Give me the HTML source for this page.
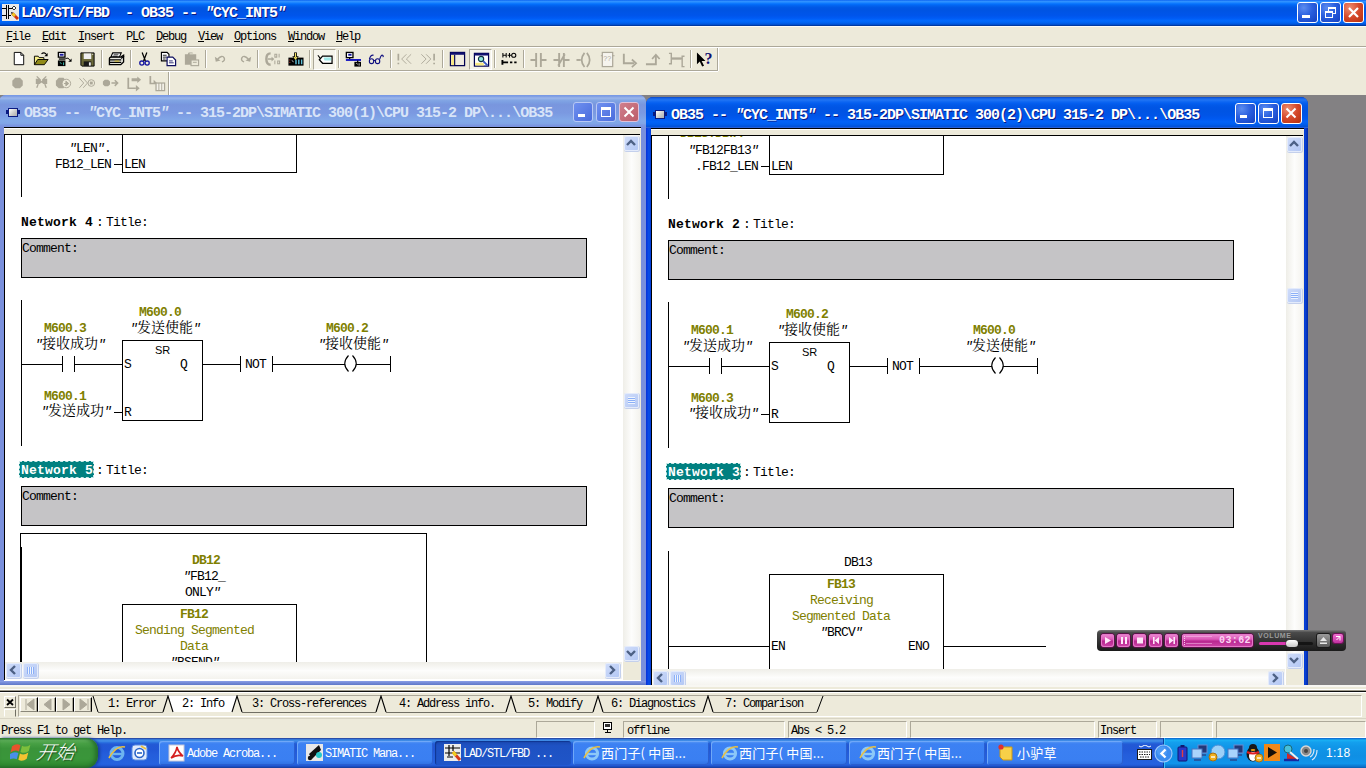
<!DOCTYPE html><html><head><meta charset="utf-8"><title>LAD/STL/FBD</title><style>
*{box-sizing:border-box}
html,body{margin:0;padding:0}
body{width:1366px;height:768px;overflow:hidden;position:relative;background:#edeada;
 font-family:"Liberation Mono","Noto Serif CJK SC",monospace;color:#000}
.a{position:absolute}
.t12{position:absolute;font-size:12px;letter-spacing:-1.2px;line-height:14px;white-space:pre}
.t14{position:absolute;font-size:13px;letter-spacing:-0.8px;line-height:16px;white-space:pre}
.t16{position:absolute;font-size:15px;letter-spacing:-1px;line-height:18px;white-space:pre;font-weight:bold}
.nw{position:absolute;font-size:13px;letter-spacing:0.2px;line-height:16px;white-space:pre;font-weight:bold}
.cj{font-family:"Noto Serif CJK SC",serif;font-size:14px;letter-spacing:0}
.ol{color:#808000}
.b{font-weight:bold}
.sr{position:absolute;font-family:"Liberation Sans",sans-serif;font-size:11px;line-height:12px}
u{text-decoration:underline;text-underline-offset:1px;text-decoration-thickness:1px}
#title{left:0;top:0;width:1366px;height:26px;
 background:linear-gradient(to bottom,#0058ee 0%,#3593ff 4%,#288eff 8%,#127dff 12%,#036ffc 16%,#0262ee 22%,#0057e5 30%,#0054e3 40%,#0055eb 60%,#005bf5 70%,#026afe 80%,#0062ef 88%,#0052d6 94%,#0040ab 97%,#003092 100%)}
.cb{position:absolute;width:21px;height:21px;border:1px solid #fff;border-radius:3px;
 background:radial-gradient(circle at 30% 25%,#5b8cf0 0%,#2a5fdf 45%,#1440c0 100%)}
.cb.x{background:radial-gradient(circle at 30% 25%,#ee8c70 0%,#d5482a 50%,#b5300f 100%)}
.cbi{position:absolute;width:21px;height:21px;border:1px solid #b8c8f4;border-radius:3px;
 background:linear-gradient(135deg,#6f90f0,#4a6cdc)}
.cbi.x{background:linear-gradient(135deg,#d07f8c,#bc5c6a);border-color:#e0c0d8}
#mdi{left:0;top:95px;width:1366px;height:591px;background:#838183;overflow:hidden}
.hl{position:absolute;height:1px;background:#000}
.vl{position:absolute;width:1px;background:#000}
.box{position:absolute;border:1px solid #000}
.cm{position:absolute;border:1px solid #000;background:#c5c4c6}
.sbv{position:absolute;width:17px;background:linear-gradient(to right,#efeee8,#fdfdfc 50%,#f4f3ee)}
.sbh{position:absolute;height:17px;background:linear-gradient(to bottom,#efeee8,#fdfdfc 50%,#f4f3ee)}
.sbb{position:absolute;width:15px;height:15px;margin:-0.5px 0 0 -0.5px;border:1px solid #e4ebfb;border-radius:2px;box-shadow:0.5px 0.5px 0 0.5px #c4d0ec;
 background:linear-gradient(135deg,#cfdcfa,#b4c8f4)}
.sep{position:absolute;width:2px;height:18px;border-left:1px solid #aca899;border-right:1px solid #fff}
.pane{position:absolute;top:721px;height:17px;border:1px solid;border-color:#aca899 #fff #fff #aca899}
#task{left:0;top:738px;width:1366px;height:30px;
 background:linear-gradient(to bottom,#1f2f86 0,#3165c4 3%,#3682e5 6%,#4490e6 10%,#3883e5 12%,#2b71e0 15%,#2663da 18%,#235bd6 20%,#2258d5 23%,#2157d6 38%,#245ddb 54%,#2562df 86%,#245fdc 89%,#2158d4 92%,#1d4ec0 95%,#1941a5 98%)}
.tbn{position:absolute;top:741px;width:136px;height:24px;border-radius:3px;
 background:linear-gradient(to bottom,#5a9af5 0,#3c81f3 12%,#3a7ff2 80%,#2f6fe0 100%);box-shadow:inset 1px 1px 0 #6fa8f8,inset -1px -1px 0 #2a5fd0}
.tbn.act{background:linear-gradient(to bottom,#1a48b0 0,#1e52c3 20%,#1f55c8 100%);box-shadow:inset 1px 1px 1px #0f3590}
.tbt{position:absolute;top:747px;color:#fff;font-size:12px;letter-spacing:-1.2px;line-height:14px;white-space:pre}
.tbt .cj{font-family:"Noto Sans CJK SC",sans-serif;font-size:12px}
</style></head><body>
<div id="title" class="a"></div><div class="a" style="left:0;top:26px;width:1366px;height:1px;background:#fbfaf6"></div>
<div class="t16" style="left:21px;top:5px;color:#fff;text-shadow:1px 1px #0a1883">LAD/STL/FBD  - OB35 -- <i>"</i>CYC_INT5<i>"</i></div>
<div class="cb" style="left:1297px;top:2px"><div class="a" style="left:4px;top:12px;width:8px;height:3px;background:#fff"></div></div>
<div class="cb" style="left:1320px;top:2px"><div class="a" style="left:7px;top:4px;width:8px;height:7px;border:1px solid #fff;border-top-width:2px"></div><div class="a" style="left:4px;top:8px;width:8px;height:7px;border:1px solid #fff;border-top-width:2px;background:#2f63e0"></div></div>
<div class="cb x" style="left:1343px;top:2px"><svg class="a" style="left:0;top:0" width="19" height="19"><path d="M5 5L14 14M14 5L5 14" stroke="#fff" stroke-width="2.2"/></svg></div>
<div class="t12" style="left:6px;top:30px"><u>F</u>ile</div>
<div class="t12" style="left:42px;top:30px"><u>E</u>dit</div>
<div class="t12" style="left:78px;top:30px"><u>I</u>nsert</div>
<div class="t12" style="left:126px;top:30px">P<u>L</u>C</div>
<div class="t12" style="left:156px;top:30px"><u>D</u>ebug</div>
<div class="t12" style="left:198px;top:30px"><u>V</u>iew</div>
<div class="t12" style="left:234px;top:30px"><u>O</u>ptions</div>
<div class="t12" style="left:288px;top:30px"><u>W</u>indow</div>
<div class="t12" style="left:336px;top:30px"><u>H</u>elp</div>
<div class="a" style="left:0;top:46px;width:1366px;height:1px;background:#aca899"></div>
<div class="a" style="left:0;top:47px;width:1366px;height:1px;background:#fff"></div>
<div class="a" style="left:0;top:70px;width:718px;height:1px;background:#aca899"></div>
<div class="a" style="left:0;top:71px;width:718px;height:1px;background:#fff"></div>
<div class="a" style="left:717px;top:48px;width:1px;height:22px;background:#aca899"></div>
<div class="a" style="left:718px;top:48px;width:1px;height:23px;background:#fff"></div>
<div class="a" style="left:168px;top:72px;width:1px;height:23px;background:#aca899"></div>
<div class="a" style="left:169px;top:72px;width:1px;height:23px;background:#fff"></div>
<div class="sep" style="left:101px;top:50px"></div>
<div class="sep" style="left:130px;top:50px"></div>
<div class="sep" style="left:205px;top:50px"></div>
<div class="sep" style="left:257px;top:50px"></div>
<div class="sep" style="left:309px;top:50px"></div>
<div class="sep" style="left:338px;top:50px"></div>
<div class="sep" style="left:390px;top:50px"></div>
<div class="sep" style="left:442px;top:50px"></div>
<div class="sep" style="left:494px;top:50px"></div>
<div class="sep" style="left:523px;top:50px"></div>
<div class="sep" style="left:690px;top:50px"></div>
<svg class="a" style="left:2px;top:4px" width="17" height="17"><rect width="17" height="17" fill="#e8e8e8"/><path d="M0 4.5h4M6 4.5h6M0 11.5h4M6 11.5h3M4.5 1v7M6.5 1v7M4.5 8v7M6.5 8v7" stroke="#000" fill="none"/><path d="M12 2l2 2l-2 2l-2 -2z" fill="#fff" stroke="#000" stroke-width=".8"/><path d="M9 8l3 1l-2 2z" fill="#000"/><path d="M10.5 9.5L16 15" stroke="#d03010" stroke-width="3"/><path d="M10.5 9.5L13 12" stroke="#f0c820" stroke-width="2.6"/></svg>
<div class="a" style="left:313px;top:49px;width:23px;height:21px;border:1px solid;border-color:#aca899 #fff #fff #aca899;background:#f6f4ec"></div>
<div class="a" style="left:469px;top:49px;width:23px;height:21px;border:1px solid;border-color:#aca899 #fff #fff #aca899;background:#f6f4ec"></div>
<svg class="a" style="left:10.0px;top:50.5px" width="17" height="17" viewBox="0 0 18 18"><path d="M4.5 1.5h7l3 3v10h-10z" fill="#fff" stroke="#000"/><path d="M11.5 1.5v3h3" fill="none" stroke="#000"/></svg>
<svg class="a" style="left:32.5px;top:50.5px" width="17" height="17" viewBox="0 0 18 18"><path d="M1.5 14.5v-9h4l1 1.5h5v2" fill="#f8f088" stroke="#000"/><path d="M1.5 14.5l3.5 -5.5h11l-4 5.5z" fill="#908a18" stroke="#000"/><path d="M9 3q3 -2.5 5.5 1" fill="none" stroke="#000" stroke-width="1.2"/><path d="M15.5 2v3.5h-3.5z" fill="#000"/></svg>
<svg class="a" style="left:55.5px;top:50.5px" width="17" height="17" viewBox="0 0 18 18"><rect x="2.5" y="1.500" width="7" height="5" fill="#fff" stroke="#000" stroke-width="1.4"/><rect x="4" y="3" width="4" height="2" fill="#1818a0"/><path d="M3 8.500h7" stroke="#000" stroke-width="1.4"/><rect x="2" y="10" width="8" height="6" fill="#000"/><path d="M4 12l2 1.500M8 12v3" stroke="#40c0b0" stroke-width="1"/><path d="M10 8q3 -2 5 2" fill="none" stroke="#000"/><path d="M16.500 8v3.500h-3.500z" fill="#000"/></svg>
<svg class="a" style="left:78.5px;top:50.5px" width="17" height="17" viewBox="0 0 18 18"><path d="M2 2h14v14h-13l-1 -1z" fill="#6a6838" stroke="#000"/><rect x="5" y="2.500" width="8" height="6" fill="#f0f0f0"/><rect x="5" y="11" width="8" height="5" fill="#181818"/><rect x="10.500" y="12" width="2" height="3.500" fill="#f0f0f0"/><rect x="14" y="3" width="1" height="1" fill="#fff"/></svg>
<svg class="a" style="left:107.5px;top:50.5px" width="17" height="17" viewBox="0 0 18 18"><path d="M5 2h9l-2 4.500h-9z" fill="#fff" stroke="#000" stroke-width="1.2"/><path d="M6 4h5M5 5.500h5" stroke="#000" stroke-width=".8"/><path d="M1.500 8q0 -1.500 2 -1.500h10l3 -2v7l-3 3h-12z" fill="#e8e8e0" stroke="#000" stroke-width="1.400"/><path d="M2 9.500h12M2 12h12M14 8l3 -3" stroke="#000" stroke-width="1.300"/><path d="M7 10.700h5" stroke="#d0b818"/></svg>
<svg class="a" style="left:136.0px;top:50.5px" width="17" height="17" viewBox="0 0 18 18"><path d="M6.500 1.500l3.500 9M11.500 1.500l-3.500 9" stroke="#000" stroke-width="1.300" fill="none"/><circle cx="6.200" cy="12.800" r="2.200" fill="none" stroke="#1818a0" stroke-width="1.400"/><circle cx="11.800" cy="12.800" r="2.200" fill="none" stroke="#1818a0" stroke-width="1.400"/></svg>
<svg class="a" style="left:160.0px;top:50.5px" width="17" height="17" viewBox="0 0 18 18"><path d="M1.500 1.500h6l2 2v7h-8z" fill="#fff" stroke="#000" stroke-width="1.200"/><path d="M3 4.500h4M3 6.500h4M3 8.500h3" stroke="#000" stroke-width=".9"/><path d="M7.500 6.500h6l3 3v6h-9z" fill="#fff" stroke="#101060" stroke-width="1.300"/><path d="M9.500 10.500h4M9.500 12.500h5" stroke="#101060" stroke-width=".9"/></svg>
<svg class="a" style="left:182.5px;top:50.5px" width="17" height="17" viewBox="0 0 18 18"><path d="M2 3.500h3l1 -2h4l1 2h3v11h-12z" fill="#aca899"/><path d="M7 3h4" stroke="#edeada"/><rect x="8.500" y="9.500" width="8" height="6" fill="#edeada" stroke="#aca899" stroke-width="1.200"/><path d="M10.500 12h4" stroke="#aca899"/></svg>
<svg class="a" style="left:211.5px;top:50.5px" width="17" height="17" viewBox="0 0 18 18"><path d="M6 8.500q5 -5 7 -1q1 3 -2.500 4" fill="none" stroke="#aca899" stroke-width="1.500"/><path d="M3 6l1 5.500l5 -1.500z" fill="#aca899"/></svg>
<svg class="a" style="left:236.5px;top:50.5px" width="17" height="17" viewBox="0 0 18 18"><path d="M12 8.500q-5 -5 -7 -1q-1 3 2.500 4" fill="none" stroke="#aca899" stroke-width="1.500"/><path d="M15 6l-1 5.500l-5 -1.500z" fill="#aca899"/></svg>
<svg class="a" style="left:263.5px;top:50.5px" width="17" height="17" viewBox="0 0 18 18"><path d="M7 2.500q-4.500 0 -4.500 6t4.500 6" fill="none" stroke="#aca899" stroke-width="2.600"/><path d="M4 8.500h5" stroke="#aca899" stroke-width="1.600"/><path d="M8 6l3 2.500l-3 2.500z" fill="#aca899"/><path d="M11.500 3.500h2v3h-2zM16 3v4M11.500 10v4M14.500 10.500h2v3h-2z" fill="none" stroke="#aca899" stroke-width="1.100"/></svg>
<svg class="a" style="left:286.5px;top:50.5px" width="17" height="17" viewBox="0 0 18 18"><rect x="1.500" y="7" width="16" height="8.500" fill="#000"/><path d="M9.500 9v5M12.500 9v5M15.500 9v5" stroke="#60c0d8" stroke-width="1.500"/><path d="M3 9v1M3 11.500v1" stroke="#e04838"/><path d="M5 10l2 1.500" stroke="#fff" stroke-width=".8"/><path d="M9 1.500v5" stroke="#000" stroke-width="3"/><path d="M5.500 5.500h7l-3.500 4z" fill="#000"/><path d="M9 2v5M7.500 6.500l1.500 2l1.500 -2" stroke="#f0e060" fill="none" stroke-width="1.200"/></svg>
<svg class="a" style="left:316.0px;top:50.5px" width="17" height="17" viewBox="0 0 18 18"><path d="M7 5.500h10v7.500h-10l-3.500 -3.700z" fill="#fff" stroke="#000" stroke-width="1.300"/><path d="M8 7h8v3h-7z" fill="#a0e8e8"/><path d="M2 4.500l3 4" stroke="#000" stroke-width="1.200"/></svg>
<svg class="a" style="left:344.0px;top:50.5px" width="17" height="17" viewBox="0 0 18 18"><rect x="2.500" y="1.500" width="7" height="5.500" fill="#fff" stroke="#000" stroke-width="1.400"/><rect x="4.500" y="3" width="3.500" height="2" fill="#1818a0"/><path d="M6 7v2" stroke="#000" stroke-width="1.400"/><path d="M2 9.500h16" stroke="#1010c0" stroke-width="2"/><rect x="11" y="11.500" width="7" height="5" fill="#000"/><path d="M13 13l1.500 1M16 13v2.500" stroke="#e8e8e8" stroke-width=".9"/><path d="M14.500 10v2" stroke="#000" stroke-width="1.400"/></svg>
<svg class="a" style="left:367.0px;top:50.5px" width="17" height="17" viewBox="0 0 18 18"><ellipse cx="4.800" cy="10.800" rx="2.300" ry="2.600" fill="none" stroke="#101080" stroke-width="1.200"/><ellipse cx="11.200" cy="10.800" rx="2.300" ry="2.600" fill="none" stroke="#101080" stroke-width="1.200"/><path d="M7.400 10h1.200M2.500 8.500q1.500 -5 4.500 -4M13.500 8.500q1.500 -5.500 3.500 -3.500l.2 1.500" fill="none" stroke="#101080" stroke-width="1.200"/></svg>
<svg class="a" style="left:395.5px;top:50.5px" width="17" height="17" viewBox="0 0 18 18"><path d="M2.500 3v7M2.500 12.500v1.500" stroke="#aca899" stroke-width="1.800"/><path d="M11 3.500l-5 5l5 5M16 3.500l-5 5l5 5" fill="none" stroke="#aca899" stroke-width="1"/></svg>
<svg class="a" style="left:418.5px;top:50.5px" width="17" height="17" viewBox="0 0 18 18"><path d="M16 3v7M16 12.500v1.500" stroke="#aca899" stroke-width="1.800"/><path d="M2.500 3.500l5 5l-5 5M7.500 3.500l5 5l-5 5" fill="none" stroke="#aca899" stroke-width="1"/></svg>
<svg class="a" style="left:448.5px;top:50.5px" width="17" height="17" viewBox="0 0 18 18"><rect x="1.500" y="1.500" width="15" height="14" fill="#f0ece0" stroke="#000050" stroke-width="1.300"/><rect x="1.500" y="1.500" width="15" height="2.500" fill="#101070"/><rect x="2.500" y="4.500" width="3" height="10.500" fill="#f8e880"/><path d="M6 4v11.500" stroke="#000050" stroke-width="1.200"/></svg>
<svg class="a" style="left:472.5px;top:50.5px" width="17" height="17" viewBox="0 0 18 18"><rect x="1.500" y="2.500" width="15" height="13.500" fill="#fff" stroke="#000050" stroke-width="1.300"/><rect x="1.500" y="2.500" width="15" height="2.300" fill="#101070"/><rect x="2.500" y="12.500" width="9" height="2.800" fill="#f8e880"/><circle cx="8.500" cy="8.500" r="2.800" fill="#90e8e0" stroke="#103040" stroke-width="1.200"/><path d="M10.800 10.800l4.500 4.500" stroke="#3858c0" stroke-width="2"/></svg>
<svg class="a" style="left:501.0px;top:50.5px" width="17" height="17" viewBox="0 0 18 18"><path d="M2 2v5M5.500 2v5M2 4.500h3.500M7 4.500h2M9 2v5M9 4.500h2" stroke="#000" stroke-width="1.100" fill="none"/><circle cx="13.500" cy="4.500" r="2.200" fill="none" stroke="#000" stroke-width="1.100"/><path d="M1.500 9.500v5M1.500 12h6" stroke="#000" stroke-width="2"/><path d="M9.500 12h2.500M14 12h2.500" stroke="#000" stroke-width="2"/></svg>
<svg class="a" style="left:529.5px;top:50.5px" width="17" height="17" viewBox="0 0 18 18"><path d="M0.500 9.500h6M11.500 9.500h6M6.500 2v15M11.500 2v15" stroke="#aca899" stroke-width="2" fill="none"/></svg>
<svg class="a" style="left:552.5px;top:50.5px" width="17" height="17" viewBox="0 0 18 18"><path d="M0.500 9.500h6M11.500 9.500h6M6.500 2v15M11.500 2v15M12.500 3.500l-7 12" stroke="#aca899" stroke-width="2" fill="none"/></svg>
<svg class="a" style="left:576.0px;top:50.5px" width="17" height="17" viewBox="0 0 18 18"><path d="M0.500 9.500h4.500" stroke="#aca899" stroke-width="2"/><path d="M9 2q-6 7.500 0 15M11.500 2q6 7.500 0 15" stroke="#aca899" stroke-width="1.800" fill="none"/></svg>
<svg class="a" style="left:598.5px;top:50.5px" width="17" height="17" viewBox="0 0 18 18"><rect x="3.500" y="1.500" width="11" height="15" fill="#f6f4ee" stroke="#aca899" stroke-width="1.300"/><path d="M2 5h2M14 5h2.500" stroke="#aca899"/><text x="4.600" y="10.500" font-family="Liberation Sans,sans-serif" font-size="7.500" fill="#aca899">??</text></svg>
<svg class="a" style="left:621.0px;top:50.5px" width="17" height="17" viewBox="0 0 18 18"><path d="M3 3v10h11" fill="none" stroke="#aca899" stroke-width="2"/><path d="M11.500 9l4.500 4l-4.500 4" fill="none" stroke="#aca899" stroke-width="1.800"/></svg>
<svg class="a" style="left:645.0px;top:50.5px" width="17" height="17" viewBox="0 0 18 18"><path d="M1 14h10.500v-9" fill="none" stroke="#aca899" stroke-width="2"/><path d="M7.500 8.500l4 -4.500l4 4.500" fill="none" stroke="#aca899" stroke-width="1.800"/></svg>
<svg class="a" style="left:667.5px;top:50.5px" width="17" height="17" viewBox="0 0 18 18"><path d="M1 2.500h2.500v11h-2.500M3.500 8h11M17.500 5.500h-2.500v11h2.500" fill="none" stroke="#aca899" stroke-width="1.500"/><path d="M4 8h10.500" stroke="#aca899" stroke-width="2.200"/></svg>
<svg class="a" style="left:695.5px;top:50.5px" width="17" height="17" viewBox="0 0 18 18"><path d="M1 1.500v12.500l3 -3l2.500 5.500l2 -1l-2.500 -5h4z" fill="#000"/><text x="9" y="14" font-family="Liberation Serif,serif" font-weight="bold" font-size="17" fill="#101070">?</text></svg>
<svg class="a" style="left:8.5px;top:74px" width="19" height="19" viewBox="0 0 20 20"><path d="M6.500 4h5l3 3v5l-3 3h-5l-3 -3v-5z" fill="#aca899"/></svg>
<svg class="a" style="left:31.5px;top:74px" width="19" height="19" viewBox="0 0 20 20"><path d="M4 5h4l2 2.500l2 -2.500h4v5.500h-4l-2 -1.500l-2 1.500h-4z" fill="#aca899"/><path d="M5 2.500l4 4M15 2.500l-4 4M5 14.500l1.500 -4M15 14.500l-1.500 -4" stroke="#aca899" stroke-width="1.400"/></svg>
<svg class="a" style="left:54.0px;top:74px" width="19" height="19" viewBox="0 0 20 20"><path d="M5 4h5l2.500 3v5l-2.500 3h-5l-3 -3v-5z" fill="#aca899"/><circle cx="13" cy="10" r="4.500" fill="#edeada" stroke="#aca899" stroke-width="1"/><path d="M10.500 10h3M12.500 7.500l3 2.500l-3 2.500z" fill="#aca899" stroke="#aca899"/></svg>
<svg class="a" style="left:77.5px;top:74px" width="19" height="19" viewBox="0 0 20 20"><path d="M1.500 4.500l4.500 5l-4.500 5M5.500 4.500l4.500 5l-4.500 5" fill="none" stroke="#aca899" stroke-width="1"/><circle cx="14" cy="9.500" r="3.500" fill="none" stroke="#aca899" stroke-width="1"/><rect x="12.500" y="8" width="3" height="3" fill="#aca899"/></svg>
<svg class="a" style="left:100.5px;top:74px" width="19" height="19" viewBox="0 0 20 20"><path d="M4 6h3.500l2 2v3l-2 2h-3.500l-2 -2v-3z" fill="#aca899"/><path d="M11 9.500h6M14.500 6.500l3 3l-3 3" fill="none" stroke="#aca899" stroke-width="1.600"/></svg>
<svg class="a" style="left:123.5px;top:74px" width="19" height="19" viewBox="0 0 20 20"><path d="M4.500 4v11h8" fill="none" stroke="#aca899" stroke-width="1.800"/><path d="M8 4.500h6v-2l4 3.500l-4 3.500v-2h-6z" fill="#aca899"/><path d="M12.500 11.500l4 3.500l-4 3.500z" fill="#aca899"/></svg>
<svg class="a" style="left:147.0px;top:74px" width="19" height="19" viewBox="0 0 20 20"><path d="M3.500 2v8h6" fill="none" stroke="#aca899" stroke-width="1.800"/><path d="M7 6l4 4l-4 0z" fill="#aca899"/><rect x="9.500" y="9.500" width="9" height="8" fill="#f4f2ea" stroke="#aca899" stroke-width="1.300"/><path d="M12.500 9.500v8M15.500 9.500v8" stroke="#aca899"/></svg>
<div id="mdi" class="a"></div>
<div class="a" style="left:-1px;top:95px;width:647px;height:605px;background:#7a90dc;border-radius:7px 7px 0 0"></div>
<div class="a" style="left:-1px;top:95px;width:647px;height:32px;background:linear-gradient(to bottom,#7697e7 0%,#7e9ee3 4%,#94afe8 8%,#97b4e9 11%,#82a5e4 17%,#7c9fe2 22%,#7996de 30%,#7b99e1 56%,#82a9e9 81%,#80a5e7 89%,#7b96e1 95%,#7a93df 100%);border-radius:7px 7px 0 0"></div>
<div class="a" style="left:6px;top:110px;width:14px;height:4px;background:#0a1a80"></div><div class="a" style="left:8px;top:108px;width:10px;height:9px;border:1px solid #0a1a80;background:linear-gradient(135deg,#fff,#c8c8c8 60%,#b0b0b0)"></div>
<div class="t16" style="left:24px;top:105px;color:#d8e4f8;">OB35 -- <i>"</i>CYC_INT5<i>"</i> -- 315-2DP\SIMATIC 300(1)\CPU 315-2 DP\...\OB35</div>
<div class="cbi" style="left:573px;top:102px;width:20px;height:20px"><div class="a" style="left:4px;top:11px;width:7px;height:3px;background:#fff"></div></div>
<div class="cbi" style="left:596px;top:102px;width:20px;height:20px"><div class="a" style="left:4px;top:4px;width:10px;height:10px;border:1px solid #fff;border-top-width:3px"></div></div>
<div class="cbi x" style="left:619px;top:102px;width:20px;height:20px"><svg class="a" style="left:0;top:0" width="18" height="18"><path d="M4.5 4.5L13.5 13.5M13.5 4.5L4.5 13.5" stroke="#fff" stroke-width="2"/></svg></div>
<div class="a" style="left:4px;top:127px;width:637px;height:565px;background:#edeada"></div>
<div class="a" style="left:4px;top:127px;width:637px;height:1px;background:#000"></div>
<div class="a" style="left:4px;top:128px;width:637px;height:1px;background:#fff"></div>
<div class="a" style="left:4px;top:134px;width:636px;height:1px;background:#000"></div>
<div class="a" style="left:4px;top:134px;width:619px;height:565px;background:#fff;border-top:1px solid #000;border-left:1px solid #000"></div>
<div class="a" style="left:5px;top:135px;width:617px;height:527px;overflow:hidden"><div class="a" style="left:-5px;top:-135px;width:700px;height:700px"><div class="vl" style="left:21px;top:120px;height:77px"></div>
<div class="t14 b ol" style="left:29px;top:124px">DB11.DBW10</div>
<div class="t14 " style="left:69px;top:141px;"><i>"</i>LEN<i>"</i>.</div>
<div class="t14 " style="left:55px;top:157px;">FB12_LEN</div>
<div class="hl" style="left:114px;top:164px;width:8px"></div>
<div class="box" style="left:122px;top:100px;width:175px;height:73px;"></div>
<div class="t14 " style="left:124px;top:157px;">LEN</div>
<div class="nw" style="left:21px;top:215px">Network 4</div>
<div class="t14 " style="left:96px;top:215px;">:</div>
<div class="t14 " style="left:106px;top:215px;">Title:</div>
<div class="cm" style="left:21px;top:238px;width:566px;height:40px;"></div>
<div class="t14 " style="left:22px;top:241px;">Comment:</div>
<div class="vl" style="left:21px;top:300px;height:146px"></div>
<div class="hl" style="left:21px;top:364px;width:41px"></div>
<div class="vl" style="left:62px;top:356px;height:16px"></div>
<div class="vl" style="left:74px;top:356px;height:16px"></div>
<div class="hl" style="left:74px;top:364px;width:48px"></div>
<div class="box" style="left:122px;top:340px;width:81px;height:81px;"></div>
<div class="sr" style="left:155px;top:344px">SR</div>
<div class="t14 " style="left:124px;top:357px;">S</div>
<div class="t14 " style="left:180px;top:357px;">Q</div>
<div class="t14 " style="left:124px;top:405px;">R</div>
<div class="hl" style="left:114px;top:412px;width:8px"></div>
<div class="hl" style="left:202px;top:364px;width:38px"></div>
<div class="vl" style="left:240px;top:356px;height:16px"></div>
<div class="t14 " style="left:245px;top:357px;">NOT</div>
<div class="vl" style="left:272px;top:356px;height:16px"></div>
<div class="hl" style="left:272px;top:364px;width:73px"></div>
<svg class="a" style="left:343px;top:355px" width="15" height="18"><path d="M5.5 0.5 Q-2 8.5 5.5 16.5M9.5 0.5 Q17 8.5 9.5 16.5" fill="none" stroke="#000" stroke-width="1.1"/></svg>
<div class="hl" style="left:356px;top:364px;width:34px"></div>
<div class="vl" style="left:390px;top:356px;height:16px"></div>
<div class="t14 b ol" style="left:44px;top:321px;">M600.3</div>
<div class="t14 " style="left:35px;top:332px;line-height:20px"><i>"</i><span class="cj">接收成功</span><i>"</i></div>
<div class="t14 b ol" style="left:139px;top:305px;">M600.0</div>
<div class="t14 " style="left:130px;top:316px;line-height:20px"><i>"</i><span class="cj">发送使能</span><i>"</i></div>
<div class="t14 b ol" style="left:44px;top:389px;">M600.1</div>
<div class="t14 " style="left:41px;top:399px;line-height:20px"><i>"</i><span class="cj">发送成功</span><i>"</i></div>
<div class="t14 b ol" style="left:326px;top:321px;">M600.2</div>
<div class="t14 " style="left:318px;top:332px;line-height:20px"><i>"</i><span class="cj">接收使能</span><i>"</i></div>
<div class="a" style="left:19px;top:461px;width:75px;height:17px;background:#008080;border:1px dashed #c8e8e8"></div>
<div class="nw" style="left:21px;top:463px;color:#fff">Network 5</div>
<div class="t14 " style="left:96px;top:463px;">:</div>
<div class="t14 " style="left:106px;top:463px;">Title:</div>
<div class="cm" style="left:21px;top:486px;width:566px;height:40px;"></div>
<div class="t14 " style="left:22px;top:489px;">Comment:</div>
<div class="box" style="left:20px;top:533px;width:407px;height:168px;"></div>
<div class="vl" style="left:21px;top:547px;height:153px"></div>
<div class="t14 b ol" style="left:192px;top:553px;">DB12</div>
<div class="t14 " style="left:183px;top:569px;"><i>"</i>FB12_</div>
<div class="t14 " style="left:185px;top:585px;">ONLY<i>"</i></div>
<div class="box" style="left:122px;top:604px;width:175px;height:97px;"></div>
<div class="t14 b ol" style="left:180px;top:607px;">FB12</div>
<div class="t14 ol" style="left:135px;top:623px;">Sending Segmented</div>
<div class="t14 ol" style="left:180px;top:639px;">Data</div>
<div class="t14 " style="left:170px;top:655px;"><i>"</i>BSEND<i>"</i></div></div></div>
<div class="sbv" style="left:623px;top:135px;height:527px"></div>
<div class="sbb" style="left:624px;top:136px"><svg width="14" height="14" viewBox="1 1 14 14" style="position:absolute;left:-0.5px;top:-0.5px"><path d="M4 10L8 6L12 10" fill="none" stroke="#4d6185" stroke-width="2.4"/></svg></div>
<div class="sbb" style="left:624px;top:646px"><svg width="14" height="14" viewBox="1 1 14 14" style="position:absolute;left:-0.5px;top:-0.5px"><path d="M4 6L8 10L12 6" fill="none" stroke="#4d6185" stroke-width="2.4"/></svg></div>
<div class="sbb" style="left:624px;top:393px"><svg width="14" height="14" style="position:absolute;left:-1px;top:-1px"><path d="M4 4.5h7M4 6.5h7M4 8.5h7M4 10.5h7" stroke="#eef4fe" stroke-width="1"/><path d="M4 5.5h7M4 7.5h7M4 9.5h7" stroke="#8cb0f8" stroke-width="1"/></svg></div>
<div class="sbh" style="left:5px;top:662px;width:617px"></div>
<div class="sbb" style="left:6px;top:663px"><svg width="14" height="14" viewBox="1 1 14 14" style="position:absolute;left:-0.5px;top:-0.5px"><path d="M10 4L6 8L10 12" fill="none" stroke="#4d6185" stroke-width="2.4"/></svg></div>
<div class="sbb" style="left:23px;top:663px"><svg width="14" height="14" style="position:absolute;left:-1px;top:-1px"><path d="M4.5 4v7M6.5 4v7M8.5 4v7M10.5 4v7" stroke="#8cb0f8" stroke-width="1"/><path d="M5.5 4v7M7.5 4v7M9.5 4v7" stroke="#eef4fe" stroke-width="1"/></svg></div>
<div class="sbb" style="left:605px;top:663px"><svg width="14" height="14" viewBox="1 1 14 14" style="position:absolute;left:-0.5px;top:-0.5px"><path d="M6 4L10 8L6 12" fill="none" stroke="#4d6185" stroke-width="2.4"/></svg></div>
<div class="a" style="left:623px;top:662px;width:17px;height:20px;background:#edeada"></div>
<div class="a" style="left:-1px;top:681px;width:647px;height:4px;background:linear-gradient(to bottom,#8a9ee6,#6f86d4 60%,#6078c8)"></div>
<div class="a" style="left:4px;top:680px;width:637px;height:1px;background:#fff"></div>
<div class="a" style="left:646px;top:97px;width:662px;height:603px;background:linear-gradient(to right,#0831d9 0,#0a50e8 3px,#0038d4 5px,#0038d4 calc(100% - 4px),#0a44d8 calc(100% - 3px),#0028a8 100%);border-radius:7px 7px 0 0"></div>
<div class="a" style="left:646px;top:97px;width:662px;height:31px;background:linear-gradient(to bottom,#0a48c8 0%,#1a6cf0 6%,#1f74f4 10%,#1068f2 15%,#045ff0 20%,#0259e8 26%,#0055e5 34%,#0054e3 45%,#0055e8 60%,#0059f0 70%,#0262f8 80%,#005eee 88%,#0052da 95%,#3a66d8 100%);border-radius:7px 7px 0 0"></div>
<div class="a" style="left:653px;top:112px;width:14px;height:4px;background:#0a1a80"></div><div class="a" style="left:655px;top:110px;width:10px;height:9px;border:1px solid #0a1a80;background:linear-gradient(135deg,#fff,#c8c8c8 60%,#b0b0b0)"></div>
<div class="t16" style="left:671px;top:107px;color:#fff;text-shadow:1px 1px #0a1883;">OB35 -- <i>"</i>CYC_INT5<i>"</i> -- 315-2DP\SIMATIC 300(2)\CPU 315-2 DP\...\OB35</div>
<div class="cb" style="left:1235px;top:103px;width:21px;height:21px"><div class="a" style="left:4px;top:11px;width:7px;height:3px;background:#fff"></div></div>
<div class="cb" style="left:1258px;top:103px;width:21px;height:21px"><div class="a" style="left:4px;top:4px;width:10px;height:10px;border:1px solid #fff;border-top-width:3px"></div></div>
<div class="cb x" style="left:1281px;top:103px;width:21px;height:21px"><svg class="a" style="left:0;top:0" width="18" height="18"><path d="M4.5 4.5L13.5 13.5M13.5 4.5L4.5 13.5" stroke="#fff" stroke-width="2"/></svg></div>
<div class="a" style="left:651px;top:128px;width:653px;height:564px;background:#edeada"></div>
<div class="a" style="left:651px;top:128px;width:653px;height:1px;background:#000"></div>
<div class="a" style="left:651px;top:129px;width:653px;height:1px;background:#fff"></div>
<div class="a" style="left:651px;top:135px;width:652px;height:1px;background:#000"></div>
<div class="a" style="left:651px;top:135px;width:635px;height:564px;background:#fff;border-top:1px solid #000;border-left:1px solid #000"></div>
<div class="a" style="left:652px;top:136px;width:633px;height:533px;overflow:hidden"><div class="a" style="left:-5px;top:-134px;width:700px;height:700px"><div class="vl" style="left:21px;top:120px;height:77px"></div>
<div class="t14 b ol" style="left:33px;top:124px">DB13.DBW4</div>
<div class="t14 " style="left:41px;top:141px;"><i>"</i>FB12FB13<i>"</i></div>
<div class="t14 " style="left:48px;top:157px;">.FB12_LEN</div>
<div class="hl" style="left:114px;top:164px;width:8px"></div>
<div class="box" style="left:122px;top:100px;width:175px;height:73px;"></div>
<div class="t14 " style="left:124px;top:157px;">LEN</div>
<div class="nw" style="left:21px;top:215px">Network 2</div>
<div class="t14 " style="left:96px;top:215px;">:</div>
<div class="t14 " style="left:106px;top:215px;">Title:</div>
<div class="cm" style="left:21px;top:238px;width:566px;height:40px;"></div>
<div class="t14 " style="left:22px;top:241px;">Comment:</div>
<div class="vl" style="left:21px;top:300px;height:146px"></div>
<div class="hl" style="left:21px;top:364px;width:41px"></div>
<div class="vl" style="left:62px;top:356px;height:16px"></div>
<div class="vl" style="left:74px;top:356px;height:16px"></div>
<div class="hl" style="left:74px;top:364px;width:48px"></div>
<div class="box" style="left:122px;top:340px;width:81px;height:81px;"></div>
<div class="sr" style="left:155px;top:344px">SR</div>
<div class="t14 " style="left:124px;top:357px;">S</div>
<div class="t14 " style="left:180px;top:357px;">Q</div>
<div class="t14 " style="left:124px;top:405px;">R</div>
<div class="hl" style="left:114px;top:412px;width:8px"></div>
<div class="hl" style="left:202px;top:364px;width:38px"></div>
<div class="vl" style="left:240px;top:356px;height:16px"></div>
<div class="t14 " style="left:245px;top:357px;">NOT</div>
<div class="vl" style="left:272px;top:356px;height:16px"></div>
<div class="hl" style="left:272px;top:364px;width:73px"></div>
<svg class="a" style="left:343px;top:355px" width="15" height="18"><path d="M5.5 0.5 Q-2 8.5 5.5 16.5M9.5 0.5 Q17 8.5 9.5 16.5" fill="none" stroke="#000" stroke-width="1.1"/></svg>
<div class="hl" style="left:356px;top:364px;width:34px"></div>
<div class="vl" style="left:390px;top:356px;height:16px"></div>
<div class="t14 b ol" style="left:44px;top:321px;">M600.1</div>
<div class="t14 " style="left:35px;top:332px;line-height:20px"><i>"</i><span class="cj">发送成功</span><i>"</i></div>
<div class="t14 b ol" style="left:139px;top:305px;">M600.2</div>
<div class="t14 " style="left:130px;top:316px;line-height:20px"><i>"</i><span class="cj">接收使能</span><i>"</i></div>
<div class="t14 b ol" style="left:44px;top:389px;">M600.3</div>
<div class="t14 " style="left:41px;top:399px;line-height:20px"><i>"</i><span class="cj">接收成功</span><i>"</i></div>
<div class="t14 b ol" style="left:326px;top:321px;">M600.0</div>
<div class="t14 " style="left:318px;top:332px;line-height:20px"><i>"</i><span class="cj">发送使能</span><i>"</i></div>
<div class="a" style="left:19px;top:461px;width:75px;height:17px;background:#008080;border:1px dashed #c8e8e8"></div>
<div class="nw" style="left:21px;top:463px;color:#fff">Network 3</div>
<div class="t14 " style="left:96px;top:463px;">:</div>
<div class="t14 " style="left:106px;top:463px;">Title:</div>
<div class="cm" style="left:21px;top:486px;width:566px;height:40px;"></div>
<div class="t14 " style="left:22px;top:489px;">Comment:</div>
<div class="vl" style="left:21px;top:549px;height:151px"></div>
<div class="t14 " style="left:197px;top:553px;">DB13</div>
<div class="box" style="left:122px;top:572px;width:175px;height:129px;"></div>
<div class="t14 b ol" style="left:180px;top:575px;">FB13</div>
<div class="t14 ol" style="left:163px;top:591px;">Receiving</div>
<div class="t14 ol" style="left:145px;top:607px;">Segmented Data</div>
<div class="t14 " style="left:173px;top:623px;"><i>"</i>BRCV<i>"</i></div>
<div class="hl" style="left:21px;top:644px;width:101px"></div>
<div class="t14 " style="left:124px;top:637px;">EN</div>
<div class="t14 " style="left:261px;top:637px;">ENO</div>
<div class="hl" style="left:296px;top:644px;width:103px"></div></div></div>
<div class="sbv" style="left:1286px;top:136px;height:533px"></div>
<div class="sbb" style="left:1287px;top:137px"><svg width="14" height="14" viewBox="1 1 14 14" style="position:absolute;left:-0.5px;top:-0.5px"><path d="M4 10L8 6L12 10" fill="none" stroke="#4d6185" stroke-width="2.4"/></svg></div>
<div class="sbb" style="left:1287px;top:653px"><svg width="14" height="14" viewBox="1 1 14 14" style="position:absolute;left:-0.5px;top:-0.5px"><path d="M4 6L8 10L12 6" fill="none" stroke="#4d6185" stroke-width="2.4"/></svg></div>
<div class="sbb" style="left:1287px;top:288px"><svg width="14" height="14" style="position:absolute;left:-1px;top:-1px"><path d="M4 4.5h7M4 6.5h7M4 8.5h7M4 10.5h7" stroke="#eef4fe" stroke-width="1"/><path d="M4 5.5h7M4 7.5h7M4 9.5h7" stroke="#8cb0f8" stroke-width="1"/></svg></div>
<div class="sbh" style="left:652px;top:669px;width:633px"></div>
<div class="sbb" style="left:653px;top:671px"><svg width="14" height="14" viewBox="1 1 14 14" style="position:absolute;left:-0.5px;top:-0.5px"><path d="M10 4L6 8L10 12" fill="none" stroke="#4d6185" stroke-width="2.4"/></svg></div>
<div class="sbb" style="left:670px;top:671px"><svg width="14" height="14" style="position:absolute;left:-1px;top:-1px"><path d="M4.5 4v7M6.5 4v7M8.5 4v7M10.5 4v7" stroke="#8cb0f8" stroke-width="1"/><path d="M5.5 4v7M7.5 4v7M9.5 4v7" stroke="#eef4fe" stroke-width="1"/></svg></div>
<div class="sbb" style="left:1268px;top:671px"><svg width="14" height="14" viewBox="1 1 14 14" style="position:absolute;left:-0.5px;top:-0.5px"><path d="M6 4L10 8L6 12" fill="none" stroke="#4d6185" stroke-width="2.4"/></svg></div>
<div class="a" style="left:1286px;top:669px;width:17px;height:20px;background:#edeada"></div>
<div class="a" style="left:0;top:685px;width:1366px;height:53px;background:#edeada"></div>
<div class="a" style="left:0;top:689px;width:1366px;height:1px;background:#fff"></div>
<div class="a" style="left:0;top:690px;width:1366px;height:1px;background:#a09c8c"></div><div class="a" style="left:0;top:691px;width:1366px;height:1px;background:#101010"></div><div class="a" style="left:0;top:685px;width:1366px;height:2px;background:#f8f7f2"></div>
<div class="a" style="left:0;top:692px;width:1366px;height:1px;background:#fff"></div>
<div class="a" style="left:18px;top:695px;width:1344px;height:22px;border:1px solid;border-color:#aca899 #fff #fff #aca899"></div>
<div class="a" style="left:4px;top:696px;width:12px;height:12px;border:1px solid;border-color:#fff #716f64 #716f64 #fff"><svg width="10" height="10" style="position:absolute;left:0;top:0"><path d="M2 2.5L8 8M8 2.5L2 8" stroke="#000" stroke-width="1.8"/></svg></div>
<div class="a" style="left:4px;top:709px;width:12px;height:8px;border:1px solid;border-color:#fff #716f64 transparent #fff"></div>
<div class="a" style="left:20px;top:697px;width:18px;height:15px;border:1px solid;border-color:#fff #000 #8a877a #fff;box-shadow:inset -1px 0 0 #aca899"><svg width="16" height="13" viewBox="0 1 16 13" style="position:absolute;left:0;top:0"><path d="M5 2v11M13 2L6 7.5L13 13z" fill="#aca899" stroke="#aca899" stroke-width="1"/></svg></div>
<div class="a" style="left:38px;top:697px;width:18px;height:15px;border:1px solid;border-color:#fff #000 #8a877a #fff;box-shadow:inset -1px 0 0 #aca899"><svg width="16" height="13" viewBox="0 1 16 13" style="position:absolute;left:0;top:0"><path d="M12 2L5 7.5L12 13z" fill="#aca899" stroke="#aca899" stroke-width="1"/></svg></div>
<div class="a" style="left:56px;top:697px;width:18px;height:15px;border:1px solid;border-color:#fff #000 #8a877a #fff;box-shadow:inset -1px 0 0 #aca899"><svg width="16" height="13" viewBox="0 1 16 13" style="position:absolute;left:0;top:0"><path d="M6 2L13 7.5L6 13z" fill="#aca899" stroke="#aca899" stroke-width="1"/></svg></div>
<div class="a" style="left:74px;top:697px;width:18px;height:15px;border:1px solid;border-color:#fff #000 #8a877a #fff;box-shadow:inset -1px 0 0 #aca899"><svg width="16" height="13" viewBox="0 1 16 13" style="position:absolute;left:0;top:0"><path d="M13 2v11M5 2L12 7.5L5 13z" fill="#aca899" stroke="#aca899" stroke-width="1"/></svg></div>
<svg class="a" style="left:90px;top:695px" width="740" height="19"><path d="M78 0.5 L83 17 L142 17 L147 0.5 Z" fill="#fff"/><path d="M3 1 L8 17" stroke="#000" fill="none"/><path d="M73 17 L78 1 L83 17" stroke="#000" fill="none" stroke-width="1.1"/><path d="M142 17 L147 1 L152 17" stroke="#000" fill="none" stroke-width="1.1"/><path d="M286 17 L291 1 L296 17" stroke="#000" fill="none" stroke-width="1.1"/><path d="M416 17 L421 1 L426 17" stroke="#000" fill="none" stroke-width="1.1"/><path d="M503 17 L508 1 L513 17" stroke="#000" fill="none" stroke-width="1.1"/><path d="M613 17 L618 1 L623 17" stroke="#000" fill="none" stroke-width="1.1"/><path d="M727 17 L733 1" stroke="#000" fill="none"/><path d="M8 17.5 H73" stroke="#716f64"/><path d="M152 17.5 H286" stroke="#716f64"/><path d="M296 17.5 H416" stroke="#716f64"/><path d="M426 17.5 H503" stroke="#716f64"/><path d="M513 17.5 H613" stroke="#716f64"/><path d="M623 17.5 H727" stroke="#716f64"/></svg>
<div class="t12" style="left:108px;top:697px">1: Error</div>
<div class="t12" style="left:182px;top:697px">2: Info</div>
<div class="t12" style="left:252px;top:697px">3: Cross-references</div>
<div class="t12" style="left:399px;top:697px">4: Address info.</div>
<div class="t12" style="left:528px;top:697px">5: Modify</div>
<div class="t12" style="left:611px;top:697px">6: Diagnostics</div>
<div class="t12" style="left:725px;top:697px">7: Comparison</div>
<div class="a" style="left:0;top:718px;width:1366px;height:1px;background:#d8d4c4"></div>
<div class="t12" style="left:1px;top:724px">Press F1 to get Help.</div>
<div class="pane" style="left:536px;width:59px"></div>
<div class="pane" style="left:623px;width:162px"></div>
<div class="pane" style="left:788px;width:119px"></div>
<div class="pane" style="left:910px;width:185px"></div>
<div class="pane" style="left:1098px;width:59px"></div>
<div class="pane" style="left:1160px;width:53px"></div>
<div class="pane" style="left:1216px;width:150px"></div>
<svg class="a" style="left:603px;top:722px" width="10" height="12"><rect x="0.5" y="0.5" width="8" height="7" fill="#fff" stroke="#000"/><rect x="2" y="2" width="5" height="3" fill="#333"/><path d="M2 10.5h6M4.5 8v2" stroke="#000"/></svg>
<div class="t12" style="left:627px;top:724px">offline</div>
<div class="t12" style="left:791px;top:724px">Abs &lt; 5.2</div>
<div class="t12" style="left:1100px;top:724px">Insert</div>
<div id="task" class="a"></div>
<div class="a" style="left:0;top:738px;width:98px;height:30px;border-radius:0 12px 12px 0;background:linear-gradient(to bottom,#2f7d2f 0,#5eb05a 8%,#48a045 18%,#3a943a 35%,#3a963a 70%,#2f8a30 90%,#256f28 100%);box-shadow:inset -3px 0 4px #256d2a, 2px 0 3px #1a3f9a"></div>
<svg class="a" style="left:10px;top:742px" width="23" height="21" viewBox="0 0 22 20"><path d="M2 4 q4 -3 8 -1 l-1.5 6 q-4 -2 -8 1z" fill="#e8532c"/><path d="M11.5 3.5 q4 2 8 -1 l-1.5 6 q-4 3 -8 1z" fill="#7cbf3c"/><path d="M0 11.5 q4 -3 8 -1 l-1.5 6 q-4 -2 -8 1z" fill="#4a8fe8"/><path d="M9.5 11 q4 2 8 -1 l-1.5 6 q-4 3 -8 1z" fill="#f4c331"/></svg>
<div class="a" style="left:37px;top:739px;font:italic 300 19px/24px 'Noto Sans CJK SC',sans-serif;color:#fff;text-shadow:1px 1px 1px #1d4a1d;transform:skewX(-10deg)">开始</div>
<svg class="a" style="left:108px;top:744px" width="18" height="18"><circle cx="9" cy="9.5" r="6" fill="none" stroke="#6db4f0" stroke-width="3"/><path d="M4 10h10" stroke="#6db4f0" stroke-width="2.4"/><path d="M1 14 Q8 1 17 3" fill="none" stroke="#e8c044" stroke-width="1.6"/></svg>
<svg class="a" style="left:131px;top:744px" width="18" height="18"><rect x="1" y="1" width="15" height="15" rx="3" fill="#dfeafc" stroke="#5d8ee0"/><circle cx="8.5" cy="9" r="4.5" fill="#fff" stroke="#2a64c8" stroke-width="1.6"/><path d="M6 9h5" stroke="#2a64c8" stroke-width="1.6"/><path d="M10 2l5 3" stroke="#e8c044" stroke-width="2"/></svg>
<div class="tbn" style="left:159px"></div>
<svg class="a" style="left:168px;top:744px" width="18" height="18"><rect x="1" y="1" width="15" height="16" fill="#fff" stroke="#c8c8d8"/><path d="M3 14 Q8 9 9 3 Q10 8 15 12 Q9 10 3 14z" fill="none" stroke="#d42020" stroke-width="1.6"/></svg>
<div class="tbt" style="left:187px">Adobe Acroba...</div>
<div class="tbn" style="left:297px"></div>
<svg class="a" style="left:306px;top:744px" width="18" height="18"><rect x="0" y="0" width="17" height="17" fill="#e8e8e8"/><path d="M13 1 L3 10 L6 15 L15 6z" fill="#101010"/><circle cx="13" cy="11" r="3" fill="#28c8c8"/><circle cx="4" cy="14" r="2.2" fill="#101010"/></svg>
<div class="tbt" style="left:325px">SIMATIC Mana...</div>
<div class="tbn act" style="left:435px"></div>
<svg class="a" style="left:444px;top:744px" width="18" height="18"><rect x="0" y="0" width="17" height="17" fill="#ececec"/><path d="M1 4h15M1 9h15M5 1v6M9 1v6M5 7v5M3 13h6" stroke="#000" stroke-width="1.2" fill="none"/><path d="M9 8l7 8" stroke="#d83818" stroke-width="3"/><path d="M9 8l3 3.5" stroke="#f0d020" stroke-width="3"/></svg>
<div class="tbt" style="left:463px">LAD/STL/FBD ...</div>
<div class="tbn" style="left:573px"></div>
<svg class="a" style="left:583px;top:744px" width="18" height="18"><circle cx="9" cy="9.5" r="5.6" fill="none" stroke="#8cc8f8" stroke-width="3"/><path d="M4 10h10" stroke="#8cc8f8" stroke-width="2.4"/><path d="M1 14 Q8 1 17 3" fill="none" stroke="#e8c044" stroke-width="1.6"/></svg>
<div class="a" style="left:601px;top:744px;color:#fff;font:13px/17px 'Noto Sans CJK SC',sans-serif;white-space:pre;letter-spacing:0.2px">西门子( 中国...</div>
<div class="tbn" style="left:711px"></div>
<svg class="a" style="left:721px;top:744px" width="18" height="18"><circle cx="9" cy="9.5" r="5.6" fill="none" stroke="#8cc8f8" stroke-width="3"/><path d="M4 10h10" stroke="#8cc8f8" stroke-width="2.4"/><path d="M1 14 Q8 1 17 3" fill="none" stroke="#e8c044" stroke-width="1.6"/></svg>
<div class="a" style="left:739px;top:744px;color:#fff;font:13px/17px 'Noto Sans CJK SC',sans-serif;white-space:pre;letter-spacing:0.2px">西门子( 中国...</div>
<div class="tbn" style="left:849px"></div>
<svg class="a" style="left:859px;top:744px" width="18" height="18"><circle cx="9" cy="9.5" r="5.6" fill="none" stroke="#8cc8f8" stroke-width="3"/><path d="M4 10h10" stroke="#8cc8f8" stroke-width="2.4"/><path d="M1 14 Q8 1 17 3" fill="none" stroke="#e8c044" stroke-width="1.6"/></svg>
<div class="a" style="left:877px;top:744px;color:#fff;font:13px/17px 'Noto Sans CJK SC',sans-serif;white-space:pre;letter-spacing:0.2px">西门子( 中国...</div>
<div class="tbn" style="left:987px"></div>
<svg class="a" style="left:997px;top:743px" width="18" height="20"><path d="M3 4h12v13h-9l-3 -3z" fill="#f8d048" stroke="#c89818"/><circle cx="4" cy="4" r="2.6" fill="#e03030"/></svg>
<div class="a" style="left:1017px;top:744px;color:#fff;font:13px/17px 'Noto Sans CJK SC',sans-serif;white-space:pre;letter-spacing:0.2px">小驴草</div>
<svg class="a" style="left:1137px;top:745px" width="15" height="16"><path d="M2 1 q2 2 4 0 t4 0 t4 0" fill="none" stroke="#fff"/><rect x="0.5" y="4.5" width="14" height="10" fill="#fff" stroke="#1a1a1a"/><path d="M2 7h11M2 9.5h11M3 12h9" stroke="#1a1a1a" stroke-dasharray="1.5 1"/></svg>
<div class="a" style="left:1163px;top:738px;width:203px;height:30px;background:linear-gradient(to bottom,#0c5fcb 0,#19b0f4 7%,#14a0ee 14%,#1096e8 30%,#0f8fe4 60%,#1094ea 85%,#0c74cc 95%,#0a5cb0 100%);border-left:1px solid #0a3e9c;box-shadow:inset 1px 0 0 #3ac0f8"></div>
<svg class="a" style="left:1154px;top:744px" width="19" height="19"><circle cx="9.5" cy="9.5" r="8.5" fill="#3a8cf0" stroke="#9cc8fc" stroke-width="1.2"/><circle cx="8" cy="7.500" r="5" fill="#5aa4f8" opacity=".6"/><path d="M11.5 5.5L7.5 9.5L11.5 13.5" fill="none" stroke="#fff" stroke-width="2.4"/></svg>
<svg class="a" style="left:1177px;top:745px" width="11" height="17"><rect x="1" y="2" width="9" height="14" rx="1" fill="#2838c8" stroke="#101870"/><rect x="3.5" y="0" width="4" height="2" fill="#101870"/><path d="M5.5 5v7" stroke="#e04040" stroke-width="1.4"/></svg>
<svg class="a" style="left:1191px;top:744px" width="17" height="18"><rect x="7" y="1" width="9" height="8" fill="#223878" stroke="#6a8ad0"/><rect x="1" y="5" width="10" height="9" fill="#a8d4fc" stroke="#4a74c0"/><path d="M3 16h7M11 11h4" stroke="#2a4a90" stroke-width="1.4"/></svg>
<svg class="a" style="left:1227px;top:744px" width="17" height="18"><rect x="7" y="1" width="9" height="8" fill="#223878" stroke="#6a8ad0"/><rect x="1" y="5" width="10" height="9" fill="#a8d4fc" stroke="#4a74c0"/><path d="M3 16h7M11 11h4" stroke="#2a4a90" stroke-width="1.4"/></svg>
<svg class="a" style="left:1208px;top:744px" width="18" height="18"><circle cx="10" cy="8" r="7" fill="#9cd0f8" stroke="#4a90d8"/><circle cx="5" cy="13" r="4" fill="#f0b020" stroke="#a87010"/><path d="M3 13h4" stroke="#fff" stroke-width="1.4"/></svg>
<svg class="a" style="left:1245px;top:743px" width="19" height="20"><ellipse cx="8" cy="11" rx="6.5" ry="7.5" fill="#181818"/><ellipse cx="8" cy="13" rx="4" ry="5" fill="#fff"/><circle cx="8" cy="5" r="4" fill="#181818"/><path d="M2 9 q6 3 12 0" stroke="#e02020" stroke-width="2" fill="none"/><ellipse cx="8" cy="7" rx="2.4" ry="1" fill="#f0a010"/><circle cx="14" cy="15" r="4" fill="#f0b020" stroke="#a87010"/><path d="M12 15h4" stroke="#fff" stroke-width="1.4"/></svg>
<svg class="a" style="left:1264px;top:744px" width="17" height="18"><rect x="0" y="0" width="16" height="17" fill="#f08818"/><path d="M4 3L13 8.5L4 14z" fill="#181008"/></svg>
<svg class="a" style="left:1282px;top:744px" width="18" height="18"><circle cx="6" cy="5" r="4" fill="#48c0d8" stroke="#186878"/><path d="M5 9v7h12z" fill="#d02828"/><path d="M2 16h15" stroke="#1828a0" stroke-width="2.4"/><path d="M8 8l8 7" stroke="#f0f0f0" stroke-width="2"/></svg>
<svg class="a" style="left:1300px;top:744px" width="18" height="19"><circle cx="6" cy="7" r="5" fill="#888" stroke="#d8d8d8" stroke-width="1.4"/><circle cx="6" cy="7" r="2" fill="#444"/><path d="M10 13 q4 -2 4 -8M12 16 q5 -3 5 -10" stroke="#d8e8f8" fill="none" stroke-width="1.2"/></svg>
<div class="a" style="left:1326px;top:746px;color:#fff;font:12px/14px 'Liberation Sans',sans-serif;letter-spacing:0.3px">1:18</div>
<div class="a" style="left:1097px;top:630px;width:249px;height:21px;border-radius:4px;background:linear-gradient(to bottom,#7a7a7a 0,#4a4a4a 12%,#3a3a3a 40%,#262626 75%,#1a1a1a 100%)"></div>
<div class="a" style="left:1101px;top:634px;width:13px;height:13px;border-radius:3px;background:linear-gradient(to bottom,#ec8cd2 0,#dc58b8 40%,#b82890 55%,#cc44a8 100%);box-shadow:0 0 0 1px #5a1048,inset 0 0 0 1px #e478c8"><svg width="14" height="13" viewBox="0 0 14 13" style="position:absolute;left:-0.5px;top:0"><path d="M4 3L10 6.5L4 10z" fill="#fde8f8"/></svg></div>
<div class="a" style="left:1117px;top:634px;width:13px;height:13px;border-radius:3px;background:linear-gradient(to bottom,#ec8cd2 0,#dc58b8 40%,#b82890 55%,#cc44a8 100%);box-shadow:0 0 0 1px #5a1048,inset 0 0 0 1px #e478c8"><svg width="14" height="13" viewBox="0 0 14 13" style="position:absolute;left:-0.5px;top:0"><path d="M4 3h2v7h-2zM8 3h2v7h-2z" fill="#fde8f8"/></svg></div>
<div class="a" style="left:1133px;top:634px;width:13px;height:13px;border-radius:3px;background:linear-gradient(to bottom,#ec8cd2 0,#dc58b8 40%,#b82890 55%,#cc44a8 100%);box-shadow:0 0 0 1px #5a1048,inset 0 0 0 1px #e478c8"><svg width="14" height="13" viewBox="0 0 14 13" style="position:absolute;left:-0.5px;top:0"><path d="M4 3.5h6v6h-6z" fill="#fde8f8"/></svg></div>
<div class="a" style="left:1149px;top:634px;width:13px;height:13px;border-radius:3px;background:linear-gradient(to bottom,#ec8cd2 0,#dc58b8 40%,#b82890 55%,#cc44a8 100%);box-shadow:0 0 0 1px #5a1048,inset 0 0 0 1px #e478c8"><svg width="14" height="13" viewBox="0 0 14 13" style="position:absolute;left:-0.5px;top:0"><path d="M4 3h1.6v7H4zM10 3L5.6 6.5L10 10z" fill="#fde8f8"/></svg></div>
<div class="a" style="left:1165px;top:634px;width:13px;height:13px;border-radius:3px;background:linear-gradient(to bottom,#ec8cd2 0,#dc58b8 40%,#b82890 55%,#cc44a8 100%);box-shadow:0 0 0 1px #5a1048,inset 0 0 0 1px #e478c8"><svg width="14" height="13" viewBox="0 0 14 13" style="position:absolute;left:-0.5px;top:0"><path d="M8.4 3H10v7H8.4zM4 3l4.4 3.5L4 10z" fill="#fde8f8"/></svg></div>
<div class="a" style="left:1182px;top:634px;width:71px;height:13px;border-radius:3px;background:linear-gradient(to bottom,#ec8cd2 0,#dc58b8 40%,#b82890 55%,#cc44a8 100%);box-shadow:0 0 0 1px #5a1048,inset 0 0 0 1px #e478c8"></div>
<svg class="a" style="left:1183px;top:635px" width="32" height="11"><path d="M1.5 1v9M3.5 1.5h26M3.5 8.5h26" stroke="#f8c8ec" stroke-dasharray="1 1"/></svg>
<div class="a" style="left:1219px;top:634px;color:#fbd4f2;font:bold 10px/13px 'Liberation Mono',monospace;letter-spacing:0.4px">03:62</div>
<div class="a" style="left:1258px;top:632px;color:#9a9a9a;font:bold 7px/8px 'Liberation Sans',sans-serif;letter-spacing:0.6px">VOLUME</div>
<div class="a" style="left:1259px;top:642px;width:54px;height:3px;border-radius:2px;background:linear-gradient(to right,#d838b0 0,#d838b0 48%,#141414 52%)"></div>
<div class="a" style="left:1286px;top:640px;width:12px;height:7px;border-radius:4px;background:linear-gradient(to bottom,#fff,#c8c8c8)"></div>
<div class="a" style="left:1317px;top:634px;width:13px;height:13px;border-radius:2px;background:linear-gradient(to bottom,#9a9a9a,#5a5a5a);box-shadow:0 0 0 1px #1a1a1a"><svg width="13" height="13" style="position:absolute;left:0;top:0"><path d="M6.5 3L10 7H3zM3 8.5h7v1.5H3z" fill="#e8e8e8"/></svg></div>
<div class="a" style="left:1333px;top:634px;width:10px;height:9px;border-radius:2px;background:linear-gradient(to bottom,#f070d0,#c030a0);box-shadow:0 0 0 1px #70105a"><svg width="10" height="9" style="position:absolute;left:0;top:0"><path d="M3 2.5h4v4M7 2.5L3.5 6" stroke="#fff" fill="none"/></svg></div>
</body></html>
